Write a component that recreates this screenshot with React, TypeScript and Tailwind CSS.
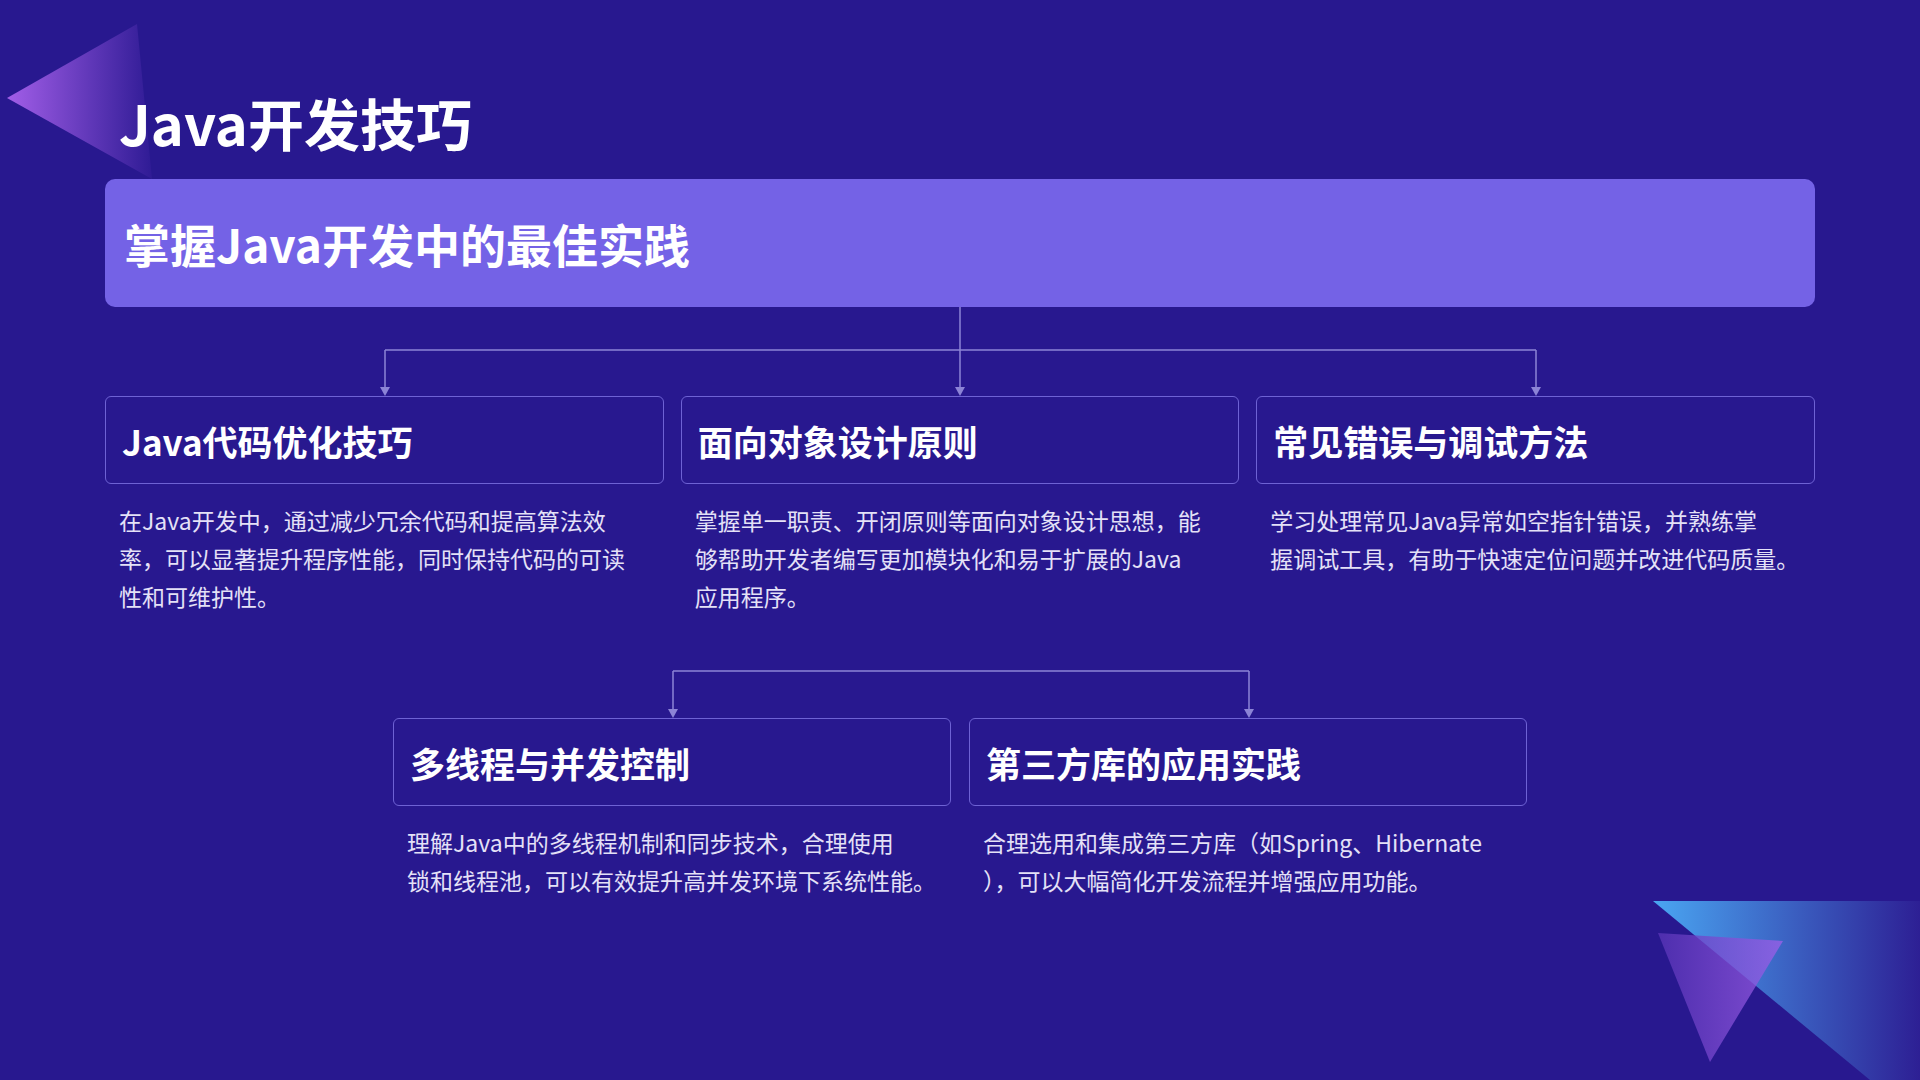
import React from "react";

const F = { fontFamily: '"Noto Sans CJK SC", "Noto Sans", sans-serif' };

function Card({ title, desc }: { title: string; desc: string[] }) {
  return (
    <div className="flex flex-col">
      <div className="h-[88px] border border-[#6e62d4] rounded-[6px] flex items-center pl-[16px]">
        <span className="text-[35px] font-bold text-white leading-none">{title}</span>
      </div>
      <div className="mt-[17px] pl-[14px] text-[23px] leading-[38px] text-[#e4e1f7]">
        {desc.map((d, i) => (
          <div key={i} className="whitespace-nowrap">{d}</div>
        ))}
      </div>
    </div>
  );
}

const LC = "#8c84d6";

export default function App() {
  return (
    <div className="relative w-[1920px] h-[1080px] overflow-hidden bg-[#28188f]" style={F}>
      <svg className="absolute left-0 top-0" width="200" height="200">
        <defs>
          <linearGradient id="g1" x1="0" y1="0" x2="1" y2="0">
            <stop offset="0" stopColor="#a25ee8" />
            <stop offset="1" stopColor="#2f1b95" />
          </linearGradient>
        </defs>
        <polygon points="7,98 137,24 152,179" fill="url(#g1)" />
      </svg>
      <svg className="absolute left-[1620px] top-[880px]" width="300" height="200">
        <defs>
          <linearGradient id="g2" x1="0" y1="0" x2="1" y2="0">
            <stop offset="0" stopColor="#4aa6f2" />
            <stop offset="1" stopColor="#2d1f94" />
          </linearGradient>
          <linearGradient id="g3" x1="0" y1="0" x2="1" y2="0">
            <stop offset="0" stopColor="#5a35b8" />
            <stop offset="1" stopColor="#a060ea" />
          </linearGradient>
        </defs>
        <polygon points="33,21 300,21 300,200 250,200" fill="url(#g2)" />
        <polygon points="38,53 163,61 90,182" fill="url(#g3)" opacity="0.75" />
      </svg>

      <div className="relative flex flex-col px-[105px] pt-[92px]">
        <h1 className="text-[56px] font-bold text-white leading-[60px] pl-[14px]">Java开发技巧</h1>
        <div className="mt-[27px] h-[128px] rounded-[10px] bg-[#7462e6] flex items-center pl-[19px]">
          <span className="text-[46px] font-bold text-white leading-none">掌握Java开发中的最佳实践</span>
        </div>
        <svg width="1710" height="89" className="block">
          <g stroke={LC} strokeWidth="1.5" fill="none">
            <line x1="855" y1="0" x2="855" y2="82" />
            <line x1="280" y1="43" x2="1431" y2="43" />
            <line x1="280" y1="43" x2="280" y2="82" />
            <line x1="1431" y1="43" x2="1431" y2="82" />
          </g>
          <g fill={LC}>
            <polygon points="275,80 285,80 280,89" />
            <polygon points="850,80 860,80 855,89" />
            <polygon points="1426,80 1436,80 1431,89" />
          </g>
        </svg>
        <div className="grid grid-cols-3 gap-[17px]">
          <Card title="Java代码优化技巧" desc={["在Java开发中，通过减少冗余代码和提高算法效", "率，可以显著提升程序性能，同时保持代码的可读", "性和可维护性。"]} />
          <Card title="面向对象设计原则" desc={["掌握单一职责、开闭原则等面向对象设计思想，能", "够帮助开发者编写更加模块化和易于扩展的Java", "应用程序。"]} />
          <Card title="常见错误与调试方法" desc={["学习处理常见Java异常如空指针错误，并熟练掌", "握调试工具，有助于快速定位问题并改进代码质量。"]} />
        </div>
        <svg width="1710" height="103" className="block">
          <g stroke={LC} strokeWidth="1.5" fill="none">
            <line x1="568" y1="56" x2="1144" y2="56" />
            <line x1="568" y1="56" x2="568" y2="96" />
            <line x1="1144" y1="56" x2="1144" y2="96" />
          </g>
          <g fill={LC}>
            <polygon points="563,94 573,94 568,103" />
            <polygon points="1139,94 1149,94 1144,103" />
          </g>
        </svg>
        <div className="flex justify-center gap-[18px]">
          <div className="w-[558px]">
            <Card title="多线程与并发控制" desc={["理解Java中的多线程机制和同步技术，合理使用", "锁和线程池，可以有效提升高并发环境下系统性能。"]} />
          </div>
          <div className="w-[558px]">
            <Card title="第三方库的应用实践" desc={["合理选用和集成第三方库（如Spring、Hibernate", "），可以大幅简化开发流程并增强应用功能。"]} />
          </div>
        </div>
      </div>
    </div>
  );
}
